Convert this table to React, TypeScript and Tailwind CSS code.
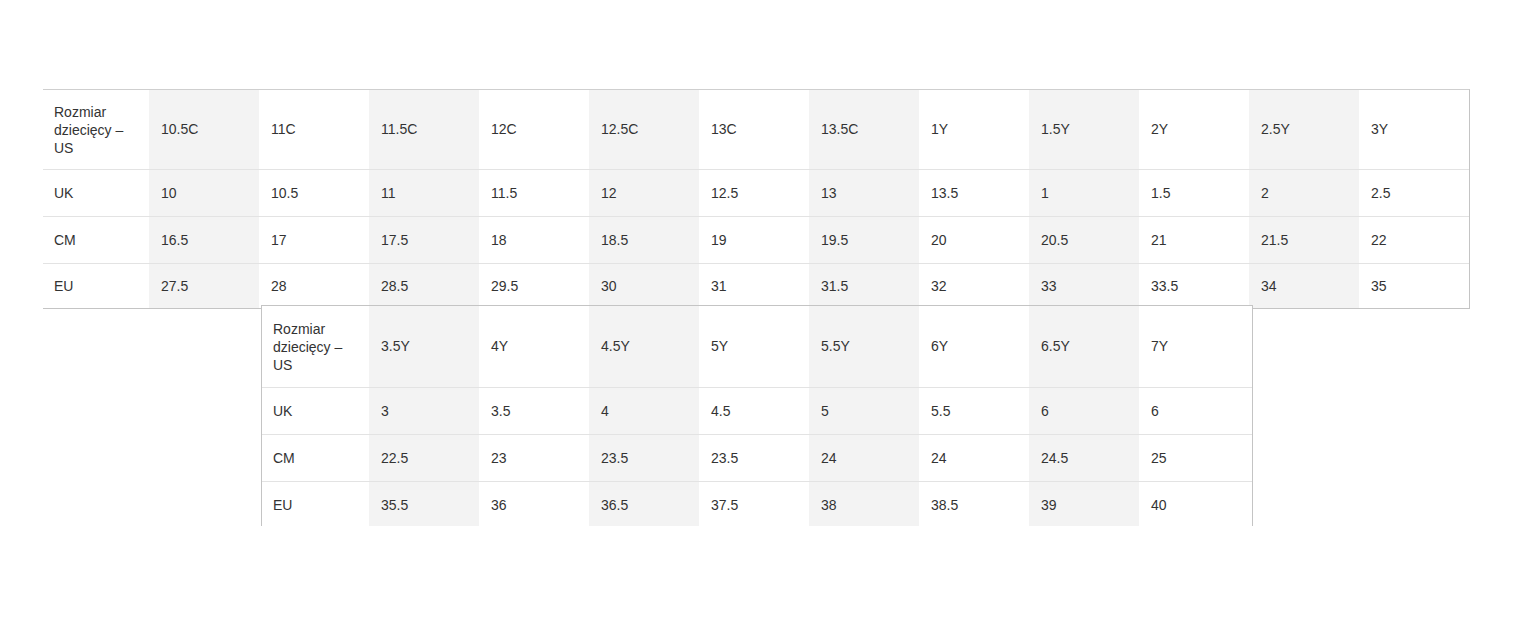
import React from "react";

const t1 = {
  us: ["10.5C", "11C", "11.5C", "12C", "12.5C", "13C", "13.5C", "1Y", "1.5Y", "2Y", "2.5Y", "3Y"],
  uk: ["10", "10.5", "11", "11.5", "12", "12.5", "13", "13.5", "1", "1.5", "2", "2.5"],
  cm: ["16.5", "17", "17.5", "18", "18.5", "19", "19.5", "20", "20.5", "21", "21.5", "22"],
  eu: ["27.5", "28", "28.5", "29.5", "30", "31", "31.5", "32", "33", "33.5", "34", "35"],
};

const t2 = {
  us: ["3.5Y", "4Y", "4.5Y", "5Y", "5.5Y", "6Y", "6.5Y", "7Y"],
  uk: ["3", "3.5", "4", "4.5", "5", "5.5", "6", "6"],
  cm: ["22.5", "23", "23.5", "23.5", "24", "24", "24.5", "25"],
  eu: ["35.5", "36", "36.5", "37.5", "38", "38.5", "39", "40"],
};

function Row({
  label,
  values,
  h,
  first,
  border,
  lastWide,
}: {
  label: React.ReactNode;
  values: string[];
  h: string;
  first: string;
  border: boolean;
  lastWide?: boolean;
}) {
  return (
    <div className={`flex ${h} ${border ? "border-b border-[#e3e3e3]" : ""}`}>
      <div className={`${first} shrink-0 flex items-center pl-[11px] pr-[11px]`}>{label}</div>
      {values.map((v, i) => (
        <div
          key={i}
          className={`${lastWide && i === values.length - 1 ? "w-[113px]" : "w-[110px]"} shrink-0 flex items-center pl-[12px] ${
            i % 2 === 0 ? "bg-[#f3f3f3]" : "bg-white"
          }`}
        >
          {v}
        </div>
      ))}
    </div>
  );
}

const header = <span className="leading-[18px]">Rozmiar dziecięcy – US</span>;

export default function App() {
  return (
    <div
      className="w-[1522px] h-[633px] bg-white text-[14px] text-[#333333] pl-[43px] pt-[89px] overflow-hidden"
      style={{ fontFamily: '"Liberation Sans", Arial, sans-serif' }}
    >
      <div className="w-[1427px] border-t border-r border-b border-t-[#cfcfcf] border-r-[#c4c4c4] border-b-[#c4c4c4]">
        <Row label={header} values={t1.us} h="h-[80px]" first="w-[106px]" border />
        <Row label="UK" values={t1.uk} h="h-[47px]" first="w-[106px]" border />
        <Row label="CM" values={t1.cm} h="h-[47px]" first="w-[106px]" border />
        <Row label="EU" values={t1.eu} h="h-[44px]" first="w-[106px]" border={false} />
      </div>
      <div className="relative ml-[218px] -mt-[4px] w-[992px] h-[221px] overflow-hidden border-t border-l border-r border-[#c4c4c4] bg-white">
        <Row label={header} values={t2.us} h="h-[82px]" first="w-[107px]" border lastWide />
        <Row label="UK" values={t2.uk} h="h-[47px]" first="w-[107px]" border lastWide />
        <Row label="CM" values={t2.cm} h="h-[47px]" first="w-[107px]" border lastWide />
        <Row label="EU" values={t2.eu} h="h-[47px]" first="w-[107px]" border={false} lastWide />
      </div>
    </div>
  );
}
